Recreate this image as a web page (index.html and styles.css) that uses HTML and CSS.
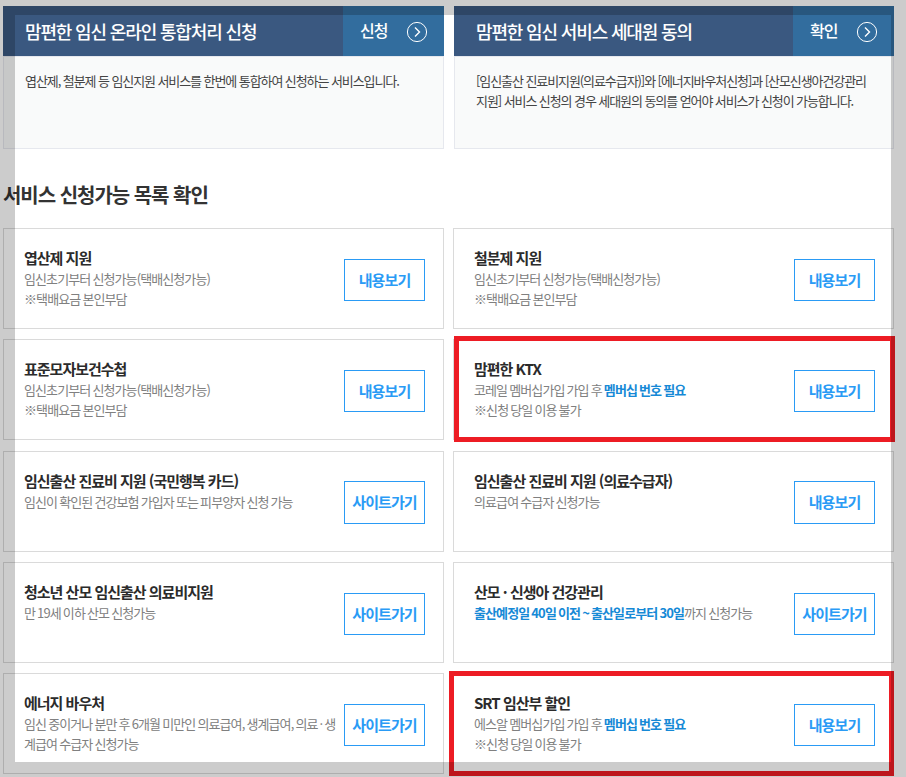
FILE: index.html
```html
<!DOCTYPE html>
<html lang="ko">
<head>
<meta charset="utf-8">
<title>맘편한 임신</title>
<link rel="stylesheet" href="styles.css">
</head>
<body>
<main class="page">
  <section class="top-grid">
    <article class="panel">
      <header class="panel-head">
        <h2 class="panel-title">맘편한 임신 온라인 통합처리 신청</h2>
        <a class="panel-action"><span>신청</span>
          <svg class="arrow" viewBox="0 0 22 22"><circle cx="11" cy="11" r="9.6"/><path d="M9 6.5l4.5 4.5L9 15.5"/></svg>
        </a>
      </header>
      <p class="panel-body">엽산제, 철분제 등 임신지원 서비스를 한번에 통합하여 신청하는 서비스입니다.</p>
    </article>
    <article class="panel">
      <header class="panel-head">
        <h2 class="panel-title">맘편한 임신 서비스 세대원 동의</h2>
        <a class="panel-action"><span>확인</span>
          <svg class="arrow" viewBox="0 0 22 22"><circle cx="11" cy="11" r="9.6"/><path d="M9 6.5l4.5 4.5L9 15.5"/></svg>
        </a>
      </header>
      <p class="panel-body">[임신출산 진료비지원(의료수급자)]와 [에너지바우처신청]과 [산모신생아건강관리 지원] 서비스 신청의 경우 세대원의 동의를 얻어야 서비스가 신청이 가능합니다.</p>
    </article>
  </section>

  <h1 class="section-title">서비스 신청가능 목록 확인</h1>

  <section class="card-grid">
    <article class="card">
      <div class="card-text"><h3>엽산제 지원</h3><p>임신초기부터 신청가능(택배신청가능)<br>※택배요금 본인부담</p></div>
      <a class="btn">내용보기</a>
    </article>
    <article class="card">
      <div class="card-text"><h3>철분제 지원</h3><p>임신초기부터 신청가능(택배신청가능)<br>※택배요금 본인부담</p></div>
      <a class="btn">내용보기</a>
    </article>
    <article class="card">
      <div class="card-text"><h3>표준모자보건수첩</h3><p>임신초기부터 신청가능(택배신청가능)<br>※택배요금 본인부담</p></div>
      <a class="btn">내용보기</a>
    </article>
    <article class="card">
      <div class="card-text"><h3>맘편한 KTX</h3><p>코레일 멤버십가입 가입 후 <b>멤버십 번호 필요</b><br>※신청 당일 이용 불가</p></div>
      <a class="btn">내용보기</a>
      <div class="mark mark-ktx"></div>
    </article>
    <article class="card">
      <div class="card-text"><h3>임신출산 진료비 지원 (국민행복 카드)</h3><p>임신이 확인된 건강보험 가입자 또는 피부양자 신청 가능</p></div>
      <a class="btn">사이트가기</a>
    </article>
    <article class="card">
      <div class="card-text"><h3>임신출산 진료비 지원 (의료수급자)</h3><p>의료급여 수급자 신청가능</p></div>
      <a class="btn">내용보기</a>
    </article>
    <article class="card">
      <div class="card-text"><h3>청소년 산모 임신출산 의료비지원</h3><p>만 19세 이하 산모 신청가능</p></div>
      <a class="btn">사이트가기</a>
    </article>
    <article class="card">
      <div class="card-text"><h3>산모 · 신생아 건강관리</h3><p><b>출산예정일 40일 이전 ~ 출산일로부터 30일</b>까지 신청가능</p></div>
      <a class="btn">사이트가기</a>
    </article>
    <article class="card">
      <div class="card-text"><h3>에너지 바우처</h3><p>임신 중이거나 분만 후 6개월 미만인 의료급여, 생계급여, 의료 · 생계급여 수급자 신청가능</p></div>
      <a class="btn">사이트가기</a>
    </article>
    <article class="card">
      <div class="card-text"><h3>SRT 임산부 할인</h3><p>에스알 멤버십가입 가입 후 <b>멤버십 번호 필요</b><br>※신청 당일 이용 불가</p></div>
      <a class="btn">내용보기</a>
      <div class="mark mark-srt"></div>
    </article>
  </section>
</main>
<div class="dim"></div>
</body>
</html>
```
FILE: styles.css
```css
* { box-sizing: border-box; }
html, body { margin: 0; height: 777px; overflow: hidden; background: #fff; }
body {
  position: relative;
  font-family: "Noto Sans CJK KR", "Noto Sans", sans-serif;
  color: #333;
}
.page { padding: 6px 12px 0 3px; }

.top-grid { display: grid; grid-template-columns: 441px 440px; column-gap: 10px; }
.panel { display: flex; flex-direction: column; height: 143px; }
.panel-head { display: flex; height: 50px; background: #3a5880; color: #fff; }
.panel-title {
  flex: 1;
  margin: 0;
  padding: 11px 0 0 22px;
  font-size: 18px;
  line-height: 28px;
  font-weight: 500;
  letter-spacing: -1.15px;
}
.panel-action {
  display: flex;
  width: 101px;
  padding: 10px 0 0 17px;
  background: #326d9e;
  font-size: 16px;
  line-height: 28px;
  font-weight: 500;
  letter-spacing: -1px;
}
.arrow { width: 22px; height: 22px; margin: 5px 0 0 19px; fill: none; stroke: #fff; stroke-width: 1; }
.arrow path { stroke-width: 1.4; }
.panel-body {
  flex: 1;
  margin: 0;
  padding: 14px 20px 0 21px;
  background: #f9fafa;
  border: 1px solid #e6e8ee;
  font-size: 13px;
  line-height: 20px;
  letter-spacing: -1.08px;
  color: #444;
}

.section-title {
  margin: 30px 0 17px 0;
  font-size: 20px;
  line-height: 32px;
  font-weight: 700;
  letter-spacing: -1.03px;
  color: #333;
}

.card-grid {
  display: grid;
  grid-template-columns: 441px 441px;
  grid-auto-rows: 101px;
  column-gap: 9px;
  row-gap: 10.25px;
}
.card {
  position: relative;
  display: flex;
  align-items: flex-start;
  justify-content: space-between;
  padding: 18px 18px 0 20px;
  border: 1px solid #dadada;
}
.card-text { width: 313px; }
.card-text h3 {
  margin: 0;
  font-size: 15px;
  line-height: 22px;
  font-weight: 700;
  letter-spacing: -1px;
  color: #2b2b2b;
}
.card-text p {
  margin: 0;
  font-size: 13px;
  line-height: 20px;
  letter-spacing: -0.9px;
  word-spacing: -0.7px;
  color: #808080;
}
.card-text b { font-weight: 700; color: #1689d6; }
.btn {
  flex: none;
  width: 81px;
  height: 42.2px;
  margin-top: 11.9px;
  border: 1px solid #2a9bf5;
  font-size: 15px;
  line-height: 40px;
  font-weight: 700;
  letter-spacing: -0.9px;
  text-align: center;
  color: #2a9bf5;
}

.mark { position: absolute; border: 5px solid #ed1c24; pointer-events: none; }
.mark-ktx { left: 0; top: -4px; width: 441px; height: 106px; }
.mark-srt { left: -5px; top: -3px; width: 445px; height: 105px; }

.dim {
  position: absolute;
  left: 15px;
  top: 15px;
  width: 876px;
  height: 747px;
  box-shadow: 0 0 0 1000px rgba(0, 0, 0, 0.2);
  pointer-events: none;
}
```
